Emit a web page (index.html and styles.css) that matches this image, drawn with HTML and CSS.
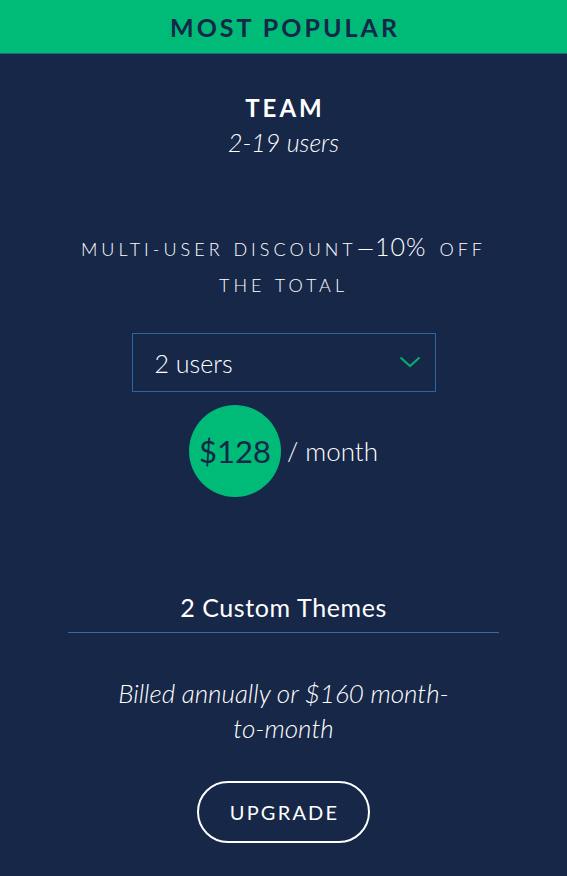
FILE: index.html
```html
<!DOCTYPE html>
<html>
<head>
<meta charset="utf-8">
<link rel="stylesheet" href="styles.css">
</head>
<body>
<div class="card">
  <div class="banner">MOST POPULAR</div>
  <div class="content">
    <div class="plan">TEAM</div>
    <div class="range">2-19 users</div>
    <div class="discount"><span class="d1">MULTI-USER DISCOUNT<span class="dash">—</span><span class="pct">10%</span> OFF</span><span class="d2">THE TOTAL</span></div>
    <div class="select">
      <span class="select-text">2 users</span>
      <svg class="chev" width="22" height="12" viewBox="0 0 22 12"><path d="M1.5 1.5 L11 10 L20.5 1.5" fill="none" stroke="#0aa872" stroke-width="2.2"/></svg>
    </div>
    <div class="price-row">
      <div class="circle">$128</div>
      <span class="per">/ month</span>
    </div>
    <div class="feature">2 Custom Themes</div>
    <div class="billed">Billed annually or $160 month-to-month</div>
    <div class="btn">UPGRADE</div>
  </div>
</div>
</body>
</html>
```
FILE: styles.css
```css
html, body {
  margin: 0;
  padding: 0;
  background: #172748;
}
body {
  font-family: "Lato", "Liberation Sans", sans-serif;
  color: #ffffff;
  width: 567px;
  height: 876px;
  overflow: hidden;
}
.card {
  display: flex;
  flex-direction: column;
}
.banner {
  background: #00BA78;
  height: 53px;
  border-bottom: 1px solid #1d6a86;
  display: flex;
  align-items: center;
  justify-content: center;
  color: #172748;
  font-weight: 700;
  font-size: 25px;
  letter-spacing: 3px;
  padding-left: 3px;
}
.content {
  display: flex;
  flex-direction: column;
  align-items: center;
}
.plan {
  margin-top: 38px;
  font-size: 24px;
  font-weight: 700;
  letter-spacing: 3px;
  line-height: 32px;
  padding-left: 3px;
}
.range {
  margin-top: 3px;
  font-size: 25px;
  font-style: italic;
  font-weight: 300;
  line-height: 30px;
}
.discount {
  margin-top: 74px;
  width: 440px;
  display: flex;
  flex-direction: column;
  align-items: center;
  text-align: center;
  font-size: 18px;
  font-weight: 300;
  letter-spacing: 4px;
  word-spacing: 1px;
}
.d1, .d2 {
  display: block;
  height: 36px;
  line-height: 36px;
}
.dash {
  font-size: 22px;
  line-height: 18px;
  letter-spacing: 0;
  margin-right: 1px;
}
.pct {
  font-size: 25px;
  line-height: 18px;
  letter-spacing: 1px;
  margin-right: 3px;
}
.select {
  margin-top: 30px;
  height: 57px;
  border: 1px solid #2a66a3;
  display: flex;
  align-items: center;
  justify-content: space-between;
  padding: 0 14px 0 22px;
  box-sizing: content-box;
  width: 266px;
}
.select-text {
  font-size: 25px;
  font-weight: 300;
}
.chev {
  margin-top: -2px;
}
.price-row {
  margin-top: 13px;
  display: flex;
  align-items: center;
  gap: 6px;
}
.circle {
  width: 92px;
  height: 92px;
  border-radius: 50%;
  background: #00BA78;
  color: #172748;
  display: flex;
  align-items: center;
  justify-content: center;
  font-size: 31px;
  font-weight: 400;
}
.per {
  font-size: 26px;
  font-weight: 300;
}
.feature {
  margin-top: 92px;
  width: 431px;
  text-align: center;
  font-size: 25px;
  font-weight: 400;
  letter-spacing: 0.6px;
  line-height: 36px;
  padding-bottom: 7px;
  border-bottom: 1px solid #2c70b2;
}
.billed {
  margin-top: 43px;
  width: 340px;
  text-align: center;
  font-size: 26px;
  font-style: italic;
  font-weight: 300;
  line-height: 35px;
}
.btn {
  margin-top: 35px;
  width: 167px;
  height: 58px;
  border: 2px solid #ffffff;
  border-radius: 31px;
  display: flex;
  align-items: center;
  justify-content: center;
  font-size: 20px;
  letter-spacing: 2.2px;
  padding-left: 2px;
}
```
